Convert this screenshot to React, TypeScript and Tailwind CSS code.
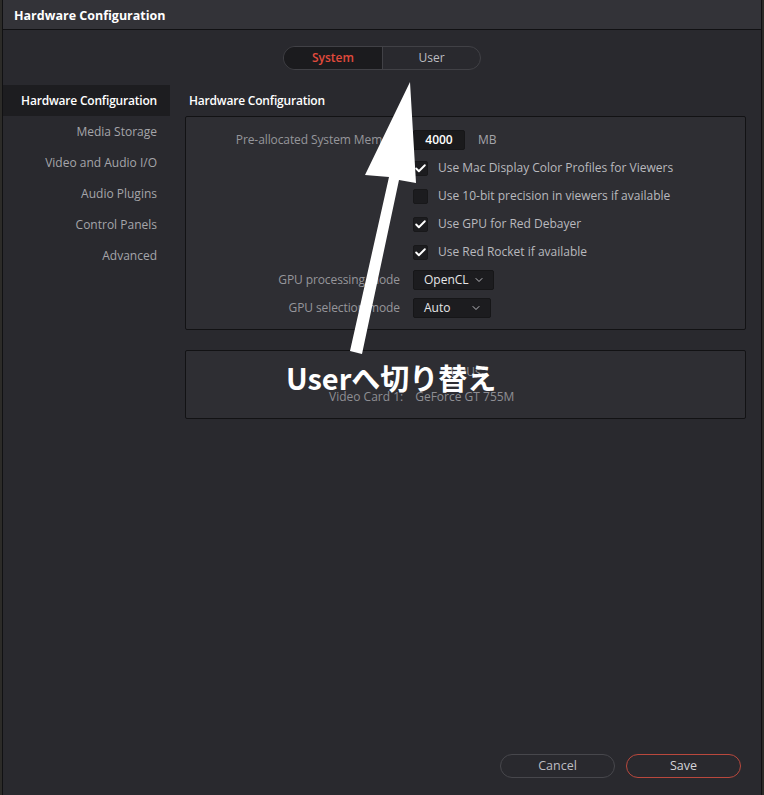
import { Check, ChevronDown } from "lucide-react";

const sideItems = [
  "Hardware Configuration",
  "Media Storage",
  "Video and Audio I/O",
  "Audio Plugins",
  "Control Panels",
  "Advanced",
];

const checks = [
  { label: "Use Mac Display Color Profiles for Viewers", on: true },
  { label: "Use 10-bit precision in viewers if available", on: false },
  { label: "Use GPU for Red Debayer", on: true },
  { label: "Use Red Rocket if available", on: true },
];

const Row = ({ label, children }: { label?: string; children: React.ReactNode }) => (
  <div className="flex h-[28px] items-center">
    <div className="w-[215px] pr-[1px] text-right tracking-[-0.1px] text-[#96969b]">{label}</div>
    <div className="ml-[12px] flex items-center">{children}</div>
  </div>
);

const Box = ({ on }: { on: boolean }) => (
  <div className="flex h-[15px] w-[15px] items-center justify-center rounded-[2px] border border-[#18181a] bg-[#1c1c1f]">
    {on && <Check size={13} strokeWidth={3.5} className="text-white" />}
  </div>
);

const Select = ({ value, w }: { value: string; w: string }) => (
  <div className={`flex h-[20px] ${w} items-center justify-between rounded-[2px] border border-[#161618] bg-[#1c1c1f] pl-[10px] pr-[8px] text-[#e6e6e8]`}>
    <span>{value}</span>
    <ChevronDown size={12} className="text-[#bbbbc0]" />
  </div>
);

export default function App() {
  return (
    <div className="relative h-[795px] w-[764px] overflow-hidden bg-[#2c2b28] text-[12px] [font-family:'Open_Sans',sans-serif]">
      <div className="ml-[2px] flex h-full w-[760px] flex-col border-x border-[#111113] bg-[#29292e]">
        {/* title bar */}
        <div className="h-[30px] border-b border-[#111113] bg-[#333338] pl-[11px] text-[12.5px] font-bold leading-[31px] text-white">
          Hardware Configuration
        </div>

        {/* system / user switch */}
        <div className="mt-[16px] flex justify-center">
          <div className="flex h-[24px] w-[198px] overflow-hidden rounded-full border border-[#414146]">
            <div className="flex w-[99px] items-center justify-center border-r border-[#414146] bg-[#1b1b1e] font-semibold text-[#e14a3c]">
              System
            </div>
            <div className="flex flex-1 items-center justify-center text-[#bdbdc2]">User</div>
          </div>
        </div>

        <div className="mt-[15px] flex">
          {/* sidebar */}
          <div className="w-[167px]">
            {sideItems.map((s, i) => (
              <div
                key={s}
                className={`h-[31px] pr-[13px] text-right leading-[31px] ${
                  i === 0 ? "bg-[#1d1d20] font-semibold tracking-[-0.2px] text-white" : "text-[#a5a5aa]"
                }`}
              >
                {s}
              </div>
            ))}
          </div>

          {/* content */}
          <div className="ml-[15px] w-[561px]">
            <div className="h-[31px] pl-[4px] font-semibold leading-[31px] tracking-[-0.2px] text-white">
              Hardware Configuration
            </div>
            <div className="rounded-[2px] border border-[#121214] bg-[#2e2e33] pb-[7px] pt-[9px]">
              <Row label="Pre-allocated System Memory">
                <div className="flex h-[20px] w-[52px] items-center justify-center rounded-[2px] border border-[#161618] bg-[#1a1a1c] font-semibold text-white">
                  4000
                </div>
                <span className="ml-[13px] text-[#a5a5aa]">MB</span>
              </Row>
              {checks.map((c) => (
                <Row key={c.label}>
                  <Box on={c.on} />
                  <span className="ml-[10px] text-[#b9b9be]">{c.label}</span>
                </Row>
              ))}
              <Row label="GPU processing mode">
                <Select value="OpenCL" w="w-[81px]" />
              </Row>
              <Row label="GPU selection mode">
                <Select value="Auto" w="w-[78px]" />
              </Row>
            </div>

            <div className="mt-[20px] h-[69px] rounded-[2px] border border-[#121214] bg-[#2e2e33] pt-[9px] text-[#8e8e93]">
              <div className="h-[24px] text-center leading-[24px]">GPUs</div>
              <div className="flex h-[26px] items-center pl-[143px]">
                <span>Video Card 1:</span>
                <span className="ml-[12px]">GeForce GT 755M</span>
              </div>
            </div>
          </div>
        </div>

        {/* footer buttons */}
        <div className="mt-auto flex justify-end gap-[11px] pb-[17px] pr-[20px]">
          <button className="h-[24px] w-[115px] rounded-full border border-[#47474c] text-[12.5px] text-[#bdbdc2]">
            Cancel
          </button>
          <button className="h-[24px] w-[115px] rounded-full border border-[#b9483d] text-[12.5px] text-[#d4d4d8]">
            Save
          </button>
        </div>
      </div>

      {/* annotation overlay */}
      <svg className="pointer-events-none absolute left-0 top-0" width="764" height="795">
        <polygon
          points="410,82 416,183 399,180 362,354 350,351 389,177 365,175"
          fill="#ffffff"
        />
      </svg>
      <div className="pointer-events-none absolute left-[286px] top-[357px] text-[29px] font-bold leading-[40px] text-white [font-family:'Noto_Sans_CJK_JP','Noto_Sans',sans-serif]">
        Userへ切り替え
      </div>
    </div>
  );
}
